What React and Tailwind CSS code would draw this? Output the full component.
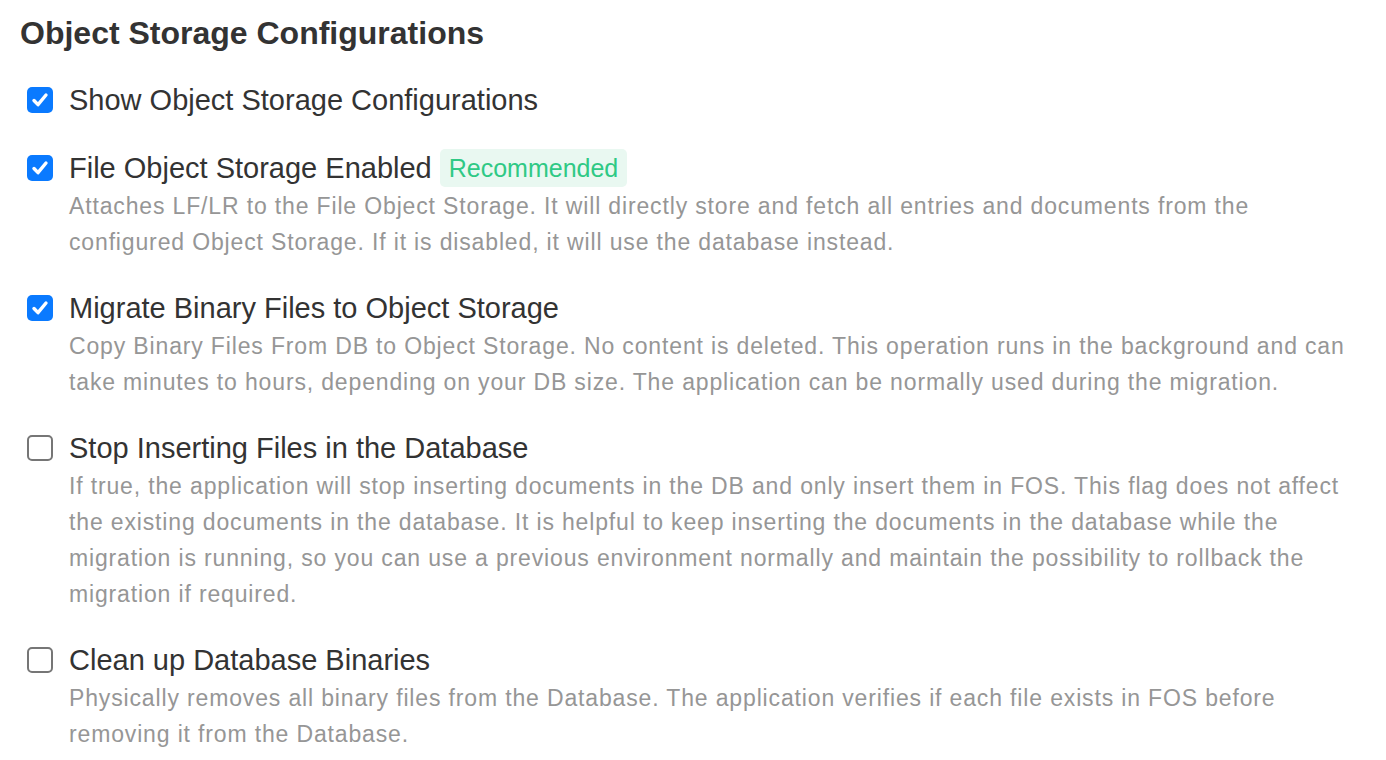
import React from "react";

const items = [
  { label: "Show Object Storage Configurations", checked: true },
  {
    label: "File Object Storage Enabled",
    checked: true,
    badge: "Recommended",
    desc: "Attaches LF/LR to the File Object Storage. It will directly store and fetch all entries and documents from the configured Object Storage. If it is disabled, it will use the database instead.",
  },
  {
    label: "Migrate Binary Files to Object Storage",
    checked: true,
    desc: "Copy Binary Files From DB to Object Storage. No content is deleted. This operation runs in the background and can take minutes to hours, depending on your DB size. The application can be normally used during the migration.",
  },
  {
    label: "Stop Inserting Files in the Database",
    checked: false,
    desc: "If true, the application will stop inserting documents in the DB and only insert them in FOS. This flag does not affect the existing documents in the database. It is helpful to keep inserting the documents in the database while the migration is running, so you can use a previous environment normally and maintain the possibility to rollback the migration if required.",
  },
  {
    label: "Clean up Database Binaries",
    checked: false,
    desc: "Physically removes all binary files from the Database. The application verifies if each file exists in FOS before removing it from the Database.",
  },
];

const Checkbox = ({ checked }) =>
  checked ? (
    <span className="w-[26px] h-[26px] rounded-[5px] bg-[#0a7aff] flex items-center justify-center shrink-0">
      <svg width="20" height="20" viewBox="0 0 20 20" fill="none">
        <path d="M4 10.5l4 4.2L16 5" stroke="white" strokeWidth="3.4" strokeLinecap="round" strokeLinejoin="round" />
      </svg>
    </span>
  ) : (
    <span className="w-[26px] h-[26px] rounded-[5px] border-2 border-[#767676] bg-white shrink-0" />
  );

const App = () => {
  return (
    <div className="w-[1386px] h-[760px] bg-white px-5 font-['Liberation_Sans',Arial,sans-serif] overflow-hidden">
      <h1 className="text-[32px] leading-[40px] font-bold text-[#333] pt-[13px]">
        Object Storage Configurations
      </h1>
      <div className="flex flex-col gap-[28px] mt-[27px] pl-[7px]">
        {items.map((item, i) => (
          <div key={i} className="flex gap-[16px]">
            <div className="h-[40px] flex items-center">
              <Checkbox checked={item.checked} />
            </div>
            <div className="flex flex-col">
              <div className="flex items-center h-[40px]">
                <span className="text-[29px] text-[#333] leading-[40px]">{item.label}</span>
                {item.badge && (
                  <span className="ml-[8px] h-[38px] px-[9px] rounded-[5px] bg-[#e9f8f1] text-[#2fc985] text-[25px] leading-[38px]">
                    {item.badge}
                  </span>
                )}
              </div>
              {item.desc && (
                <p className="text-[23px] tracking-[0.85px] leading-[36px] text-[#969696] max-w-[1292px]">{item.desc}</p>
              )}
            </div>
          </div>
        ))}
      </div>
    </div>
  );
};

export default App;
